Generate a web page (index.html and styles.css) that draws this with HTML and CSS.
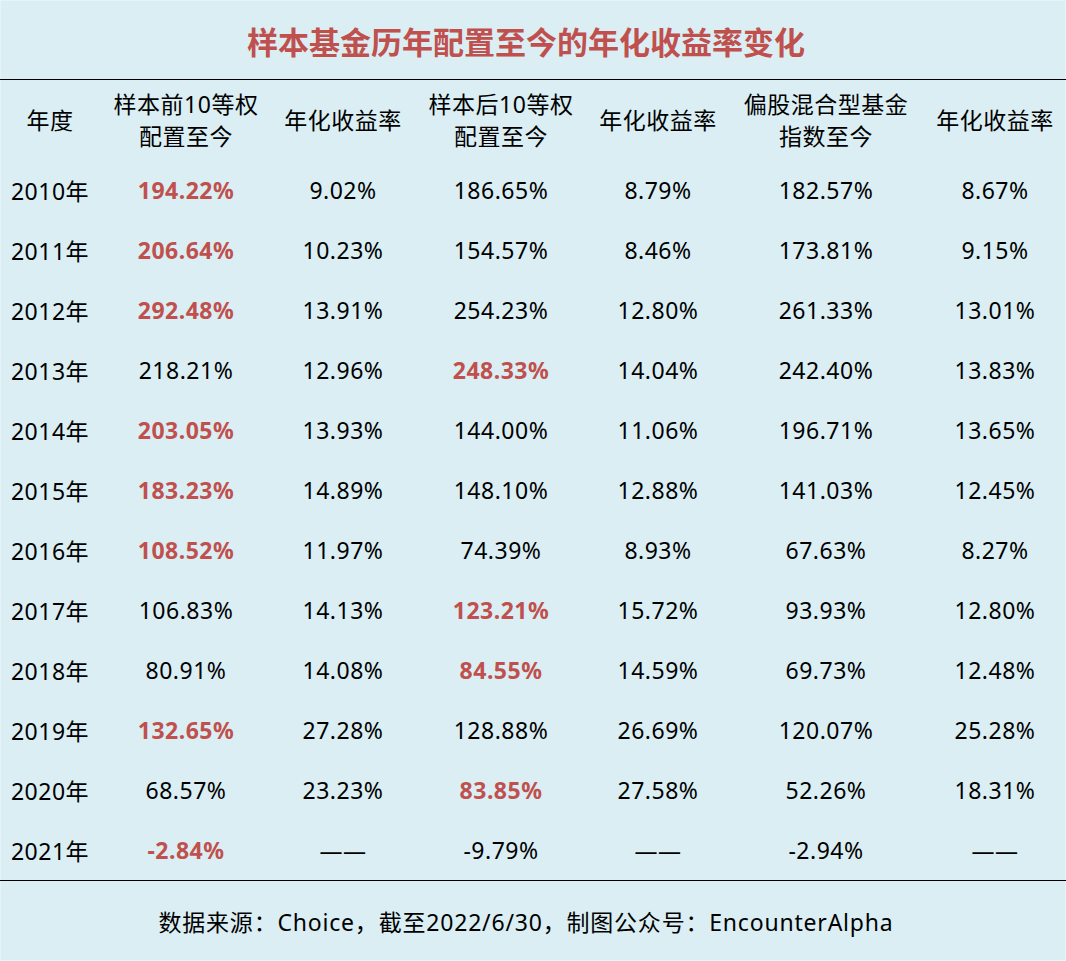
FILE: index.html
```html
<!DOCTYPE html>
<html lang="zh-CN">
<head>
<meta charset="utf-8">
<link rel="stylesheet" href="styles.css">
</head>
<body>
<div class="sheet">
  <div class="title">样本基金历年配置至今的年化收益率变化</div>
  <table class="grid">
    <colgroup>
      <col class="c1"><col class="c2"><col class="c3"><col class="c4"><col class="c5"><col class="c6"><col class="c7">
    </colgroup>
    <thead>
      <tr>
        <th>年度</th>
        <th>样本前10等权<br>配置至今</th>
        <th>年化收益率</th>
        <th>样本后10等权<br>配置至今</th>
        <th>年化收益率</th>
        <th>偏股混合型基金<br>指数至今</th>
        <th>年化收益率</th>
      </tr>
    </thead>
    <tbody>
      <tr><td>2010年</td><td class="hi">194.22%</td><td>9.02%</td><td>186.65%</td><td>8.79%</td><td>182.57%</td><td>8.67%</td></tr>
      <tr><td>2011年</td><td class="hi">206.64%</td><td>10.23%</td><td>154.57%</td><td>8.46%</td><td>173.81%</td><td>9.15%</td></tr>
      <tr><td>2012年</td><td class="hi">292.48%</td><td>13.91%</td><td>254.23%</td><td>12.80%</td><td>261.33%</td><td>13.01%</td></tr>
      <tr><td>2013年</td><td>218.21%</td><td>12.96%</td><td class="hi">248.33%</td><td>14.04%</td><td>242.40%</td><td>13.83%</td></tr>
      <tr><td>2014年</td><td class="hi">203.05%</td><td>13.93%</td><td>144.00%</td><td>11.06%</td><td>196.71%</td><td>13.65%</td></tr>
      <tr><td>2015年</td><td class="hi">183.23%</td><td>14.89%</td><td>148.10%</td><td>12.88%</td><td>141.03%</td><td>12.45%</td></tr>
      <tr><td>2016年</td><td class="hi">108.52%</td><td>11.97%</td><td>74.39%</td><td>8.93%</td><td>67.63%</td><td>8.27%</td></tr>
      <tr><td>2017年</td><td>106.83%</td><td>14.13%</td><td class="hi">123.21%</td><td>15.72%</td><td>93.93%</td><td>12.80%</td></tr>
      <tr><td>2018年</td><td>80.91%</td><td>14.08%</td><td class="hi">84.55%</td><td>14.59%</td><td>69.73%</td><td>12.48%</td></tr>
      <tr><td>2019年</td><td class="hi">132.65%</td><td>27.28%</td><td>128.88%</td><td>26.69%</td><td>120.07%</td><td>25.28%</td></tr>
      <tr><td>2020年</td><td>68.57%</td><td>23.23%</td><td class="hi">83.85%</td><td>27.58%</td><td>52.26%</td><td>18.31%</td></tr>
      <tr><td>2021年</td><td class="hi">-2.84%</td><td>——</td><td>-9.79%</td><td>——</td><td>-2.94%</td><td>——</td></tr>
    </tbody>
  </table>
  <div class="footer">数据来源：Choice，截至2022/6/30，制图公众号：EncounterAlpha</div>
</div>
</body>
</html>
```

FILE: styles.css
```css
html, body {
  margin: 0;
  padding: 0;
  background: #daeef3;
}
.sheet {
  width: 1066px;
  height: 961px;
  background: #daeef3;
  font-family: "Noto Sans", "Noto Sans CJK SC", sans-serif;
  color: #000;
  box-sizing: border-box;
  display: flex;
  flex-direction: column;
  box-shadow: inset 0 0 0 1px #e6f3f7;
}
.title {
  height: 80px;
  display: flex;
  align-items: center;
  justify-content: center;
  font-family: "Noto Sans CJK SC", sans-serif;
  font-weight: bold;
  font-size: 31px;
  color: #c0504d;
  border-bottom: 1px solid #000;
  box-sizing: border-box;
  padding-top: 2px;
  padding-right: 14px;
}
.grid {
  width: 1066px;
  border-collapse: collapse;
  table-layout: fixed;
  font-size: 23px;
  letter-spacing: 0.5px;
}
.c1 { width: 100px; }
.c2 { width: 172px; }
.c3 { width: 142px; }
.c4 { width: 174px; }
.c5 { width: 140px; }
.c6 { width: 196px; }
.c7 { width: 142px; }
.grid th {
  height: 80px;
  padding: 0;
  font-weight: normal;
  line-height: 32px;
  text-align: center;
  vertical-align: middle;
}
.grid td {
  height: 60px;
  padding: 0;
  text-align: center;
  vertical-align: middle;
  white-space: nowrap;
}
.grid td.hi {
  color: #c0504d;
  font-weight: bold;
}
.footer {
  flex: 1;
  border-top: 1px solid #000;
  display: flex;
  align-items: center;
  justify-content: center;
  font-size: 23px;
  letter-spacing: 0.8px;
  padding-right: 14px;
}
```
